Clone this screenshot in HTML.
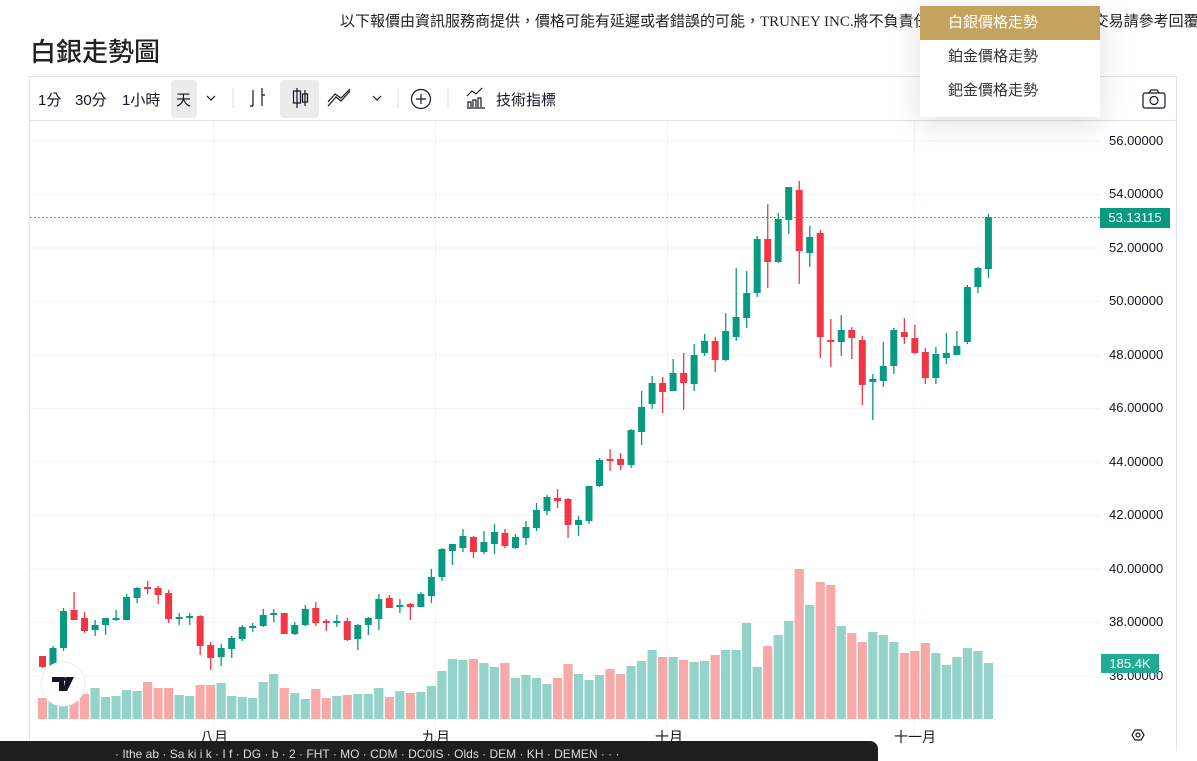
<!DOCTYPE html>
<html><head><meta charset="utf-8">
<style>
*{margin:0;padding:0;box-sizing:border-box}
body{width:1197px;height:751px;overflow:hidden;background:#fff;position:relative;font-family:"Liberation Sans","Noto Sans CJK TC",sans-serif;color:#131722}
.abs{position:absolute;white-space:nowrap}
.disc{left:340px;top:10px;font-size:15px;font-family:"Liberation Serif","Noto Sans CJK TC",serif;color:#222}
.title{left:30px;top:32px;font-size:26px;color:#222;font-weight:500;font-family:"Noto Sans CJK TC",sans-serif;line-height:38px}
.tb{font-size:15px;color:#131722;top:89px}
.pl{font-size:13px;color:#131722;left:1109px}
.dd{left:920px;top:6px;width:180px;height:111px;background:#fff;box-shadow:0 6px 30px rgba(0,0,0,.13)}
.dd div{height:34px;line-height:34px;padding-left:28px;font-size:15px;color:#333}
</style></head><body>
<div class="abs disc">以下報價由資訊服務商提供，價格可能有延遲或者錯誤的可能，TRUNEY INC.將不負責任何損失或法律責任，實際交易請參考回覆報價</div>
<div class="abs title">白銀走勢圖</div>
<!-- frame -->
<div class="abs" style="left:29px;top:76px;width:1148px;height:1px;background:#e0e3eb"></div>
<div class="abs" style="left:29px;top:120px;width:1148px;height:1px;background:#e0e3eb"></div>
<div class="abs" style="left:29px;top:76px;width:1px;height:675px;background:#e0e3eb"></div>
<div class="abs" style="left:1176px;top:76px;width:1px;height:675px;background:#e0e3eb"></div>
<!-- toolbar -->
<div class="abs tb" style="left:38px">1分</div>
<div class="abs tb" style="left:75px">30分</div>
<div class="abs tb" style="left:122px">1小時</div>
<div class="abs" style="left:171px;top:80px;width:26px;height:38px;background:#ebebeb;border-radius:4px"></div>
<div class="abs tb" style="left:176px">天</div>
<div class="abs" style="left:280px;top:80px;width:39px;height:38px;background:#ebebeb;border-radius:4px"></div>
<svg class="abs" style="left:0;top:76px" width="1197" height="45">
<g fill="none" stroke="#131722" stroke-width="1.2">
<path d="M207 20l4 4 4-4"/>
<path d="M373 20l4 4 4-4"/>
<path d="M233 12v20M398 12v20M448 12v20" stroke="#e0e3eb"/>
<path d="M253 14v16M250 30h3M262 12v18M262 19h3"/>
<path d="M297 12v20M293.5 15h7v12h-7zM305 14v16M302.5 18h5v8h-5z"/>
<path d="M328 30l8-9 5 4 9-10M328 26l7-8 6 4 9-9"/>
<circle cx="421" cy="23" r="9.5"/><path d="M416 23h10M421 18v10"/>
<path d="M467 32h18M468 31v-5h3v5M473 31v-7h3v7M478 31v-9h3v9M467 20l5-5 4 3 6-6"/>
<rect x="1143" y="17" width="22" height="15" rx="2"/><path d="M1149 17l2-3h6l2 3"/><circle cx="1154" cy="24.5" r="4"/>
</g></svg>
<div class="abs tb" style="left:496px">技術指標</div>
<!-- chart -->
<svg class="abs" style="left:0;top:0" width="1197" height="751">
<g stroke="#f0f3fa" stroke-width="1">
<path d="M30 141H1100M30 194.5H1100M30 248H1100M30 301.5H1100M30 355H1100M30 408.5H1100M30 462H1100M30 515.5H1100M30 569H1100M30 622.5H1100M30 676H1100"/>
<path d="M213.5 121V740M435.5 121V740M667.5 121V740M914.5 121V740"/>
</g>
<g id="vol"></g><g id="cdl"></g>
<path d="M30 217.5H1100" stroke="#089981" stroke-dasharray="1.5 2.5"/>
<circle cx="63" cy="684" r="22" fill="#fff" stroke="#eee"/>
<path d="M52 677h12v14h-5v-9h-7z M66 677h8l-7 14h-4z" fill="#131722"/>
<circle cx="64" cy="679" r="2" fill="#131722"/>
<path d="M1132 735l3-5h6l3 5-3 5h-6z M1138 733a2 2 0 1 0 .01 0" fill="none" stroke="#131722" stroke-width="1.2"/>
</svg>
<div class="abs pl" style="top:133px">56.00000</div>
<div class="abs pl" style="top:186px">54.00000</div>
<div class="abs pl" style="top:240px">52.00000</div>
<div class="abs pl" style="top:293px">50.00000</div>
<div class="abs pl" style="top:347px">48.00000</div>
<div class="abs pl" style="top:400px">46.00000</div>
<div class="abs pl" style="top:454px">44.00000</div>
<div class="abs pl" style="top:507px">42.00000</div>
<div class="abs pl" style="top:561px">40.00000</div>
<div class="abs pl" style="top:614px">38.00000</div>
<div class="abs pl" style="top:668px">36.00000</div>
<div class="abs" style="left:1100px;top:208px;width:70px;height:20px;background:#089981;color:#fff;font-size:13px;line-height:20px;text-align:center">53.13115</div>
<div class="abs" style="left:1101px;top:654px;width:58px;height:19px;background:#22ab94;color:#fff;font-size:13px;line-height:19px;text-align:center">185.4K</div>
<div class="abs" style="left:200px;top:727px;font-size:14px">八月</div>
<div class="abs" style="left:422px;top:727px;font-size:14px">九月</div>
<div class="abs" style="left:655px;top:727px;font-size:14px">十月</div>
<div class="abs" style="left:894px;top:727px;font-size:14px">十一月</div>
<div class="abs" style="left:0;top:741px;width:878px;height:20px;background:#1e1e1e;border-radius:0 8px 0 0;color:#ddd;font-size:12px;padding:6px 0 0 115px">· Ithe ab · Sa ki i k · I f · DG · b · 2 · FHT · MO · CDM · DC0IS · Olds · DEM · KH · DEMEN · · ·</div>
<div class="abs dd">
<div style="background:#c4a35e;color:#fff">白銀價格走勢</div>
<div>鉑金價格走勢</div>
<div>鈀金價格走勢</div>
</div>
<script>
var C=[
['r',656,667,656,668],['g',648,666,646,667],['g',611,648,608,651],['r',610,620,592,620],['r',618,631,612,633],
['g',625,630,620,636],['g',618,625,618,635],['g',618,620,610,621],['g',597,620,594,620],['g',588,598,587,603],
['r',587,589,581,594],['r',588,595,586,604],['r',593,619,590,623],['g',617,619,613,625],['g',616,618,613,625],
['r',616,646,615,655],['r',645,658,642,670],['g',648,657,644,666],['g',638,649,636,658],['g',627,639,625,641],
['g',626,628,623,632],['g',615,626,609,627],['g',613,615,609,622],['r',613,634,613,634],['g',625,634,622,635],
['g',609,625,605,626],['r',608,623,602,626],['r',621,623,619,631],['g',621,623,615,627],['r',621,640,618,641],
['g',625,639,624,650],['g',618,625,617,635],['g',599,619,594,630],['r',598,608,595,608],['g',605,607,599,613],
['r',604,607,603,620],['g',594,607,592,607],['g',577,596,569,603],['g',549,577,548,581],['g',544,551,544,565],
['g',536,548,529,552],['r',537,552,536,558],['g',542,552,531,554],['g',532,544,524,554],['r',533,546,529,548],
['g',537,548,534,549],['g',527,538,521,545],['g',510,528,503,531],['g',497,511,495,515],['r',498,501,489,508],
['r',499,525,498,538],['g',520,525,516,536],['g',486,521,486,524],['g',460,486,458,487],['r',459,461,449,471],
['r',459,465,453,470],['g',430,465,429,468],['g',407,432,391,445],['g',383,404,376,409],['r',383,392,377,413],
['g',373,391,359,391],['r',373,383,353,410],['g',355,384,344,391],['g',341,353,334,356],['r',341,360,337,372],
['g',331,360,313,361],['g',317,337,268,341],['g',293,318,271,328],['g',239,293,236,297],['r',239,262,204,288],
['g',219,262,213,263],['g',187,220,187,234],['r',190,251,181,284],['g',237,253,226,267],['r',233,337,230,358],
['r',340,342,319,367],['g',330,342,315,356],['r',330,338,327,359],['r',340,385,336,405],['g',379,382,374,420],
['g',366,381,342,387],['g',330,366,328,374],['r',332,337,318,344],['r',338,353,325,354],['r',352,378,348,384],
['g',354,378,347,384],['g',353,358,333,364],['g',346,355,331,355],['g',287,342,285,344],['g',268,287,267,293],
['g',217,269,214,278]];
var V=[698,691,691,694,694,688,697,696,690,691,682,688,688,695,696,685,685,683,696,697,698,682,674,688,693,699,689,698,696,695,694,694,688,697,691,693,692,686,671,659,660,659,663,667,663,678,675,678,684,678,664,674,680,675,669,674,666,661,650,657,657,660,662,661,655,650,650,623,667,646,635,621,569,605,582,585,626,633,642,632,635,642,653,651,643,653,665,657,648,651,663];
var ns='http://www.w3.org/2000/svg',cd=document.getElementById('cdl'),vg=document.getElementById('vol');
function el(t,a,p){var e=document.createElementNS(ns,t);for(var k in a)e.setAttribute(k,a[k]);p.appendChild(e);}
for(var i=0;i<C.length;i++){var x=42.5+10.51*i,c=C[i],col=c[0]=='g'?'#089981':'#f23645';
el('rect',{x:x-4.6,y:V[i],width:9.2,height:719-V[i],fill:c[0]=='g'?'#93d3c9':'#f7a9a7'},vg);
el('rect',{x:x-0.6,y:c[3],width:1.3,height:c[4]-c[3],fill:col},cd);
el('rect',{x:x-3.5,y:c[1],width:7,height:Math.max(2,c[2]-c[1]),fill:col},cd);}
</script>
</body></html>
